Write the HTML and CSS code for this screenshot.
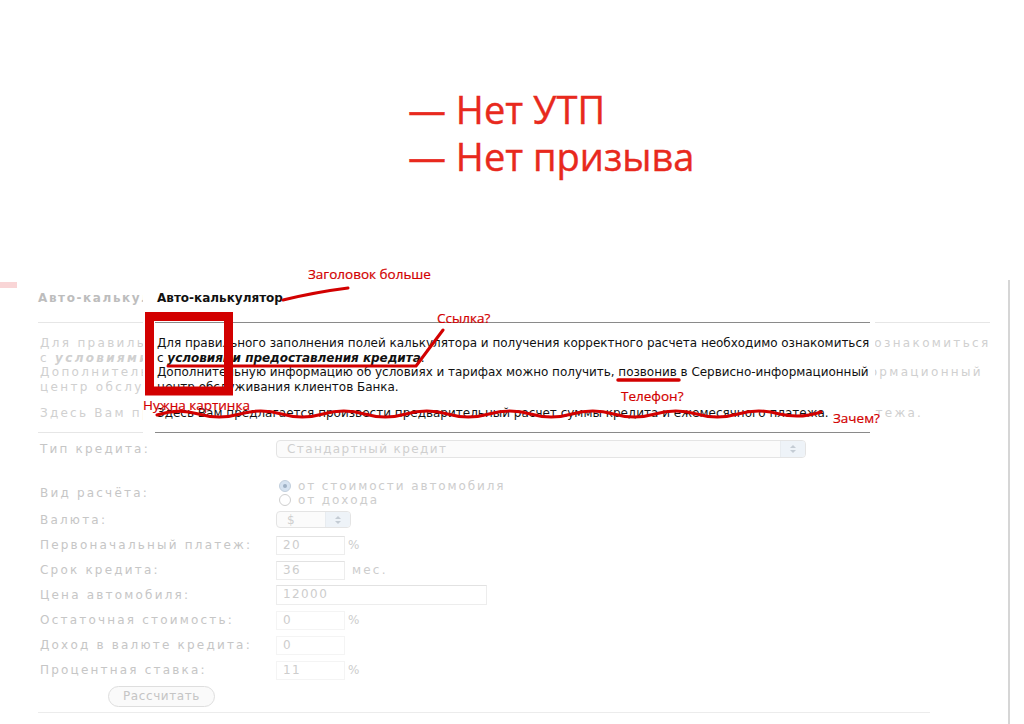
FILE: index.html
```html
<!DOCTYPE html>
<html lang="ru">
<head>
<meta charset="utf-8">
<title>Авто-калькулятор</title>
<link rel="stylesheet" href="styles.css">
</head>
<body>
<div class="slide">
  <div class="points">
    <div class="point">— Нет УТП</div>
    <div class="point">— Нет призыва</div>
  </div>

  <div class="page">
    <div class="tab"></div>
    <div class="page-body">
      <div class="title">Авто-калькулятор</div>
      <div class="rule rule-top"></div>
      <div class="intro">
        <div class="ln">Для правильного заполнения полей калькулятора и получения корректного расчета необходимо ознакомиться</div>
        <div class="ln">с <b><i>условиями предоставления кредита</i></b>.</div>
        <div class="ln">Дополнительную информацию об условиях и тарифах можно получить, позвонив в Сервисно-информационный</div>
        <div class="ln">центр обслуживания клиентов Банка.</div>
      </div>
      <div class="note">Здесь Вам предлагается произвести предварительный расчет суммы кредита и ежемесячного платежа.</div>
      <div class="rule rule-mid"></div>

      <div class="calc">
        <div class="row row-type">
          <div class="label">Тип кредита:</div>
          <div class="select select-wide"><span class="sel-text">Стандартный кредит</span><span class="stepper"><span class="up"></span><span class="down"></span></span></div>
        </div>
        <div class="row row-kind">
          <div class="label">Вид расчёта:</div>
          <div class="radios">
            <div class="radio-line"><span class="radio checked"></span>от стоимости автомобиля</div>
            <div class="radio-line"><span class="radio"></span>от дохода</div>
          </div>
        </div>
        <div class="row row-cur">
          <div class="label">Валюта:</div>
          <div class="select select-small"><span class="sel-text">$</span><span class="stepper"><span class="up"></span><span class="down"></span></span></div>
        </div>
        <div class="row">
          <div class="label">Первоначальный платеж:</div>
          <div class="input">20</div><span class="unit">%</span>
        </div>
        <div class="row">
          <div class="label">Срок кредита:</div>
          <div class="input">36</div><span class="unit unit-wide">мес.</span>
        </div>
        <div class="row">
          <div class="label">Цена автомобиля:</div>
          <div class="input input-wide">12000</div>
        </div>
        <div class="row">
          <div class="label">Остаточная стоимость:</div>
          <div class="input input-faint">0</div><span class="unit">%</span>
        </div>
        <div class="row">
          <div class="label">Доход в валюте кредита:</div>
          <div class="input input-faint">0</div>
        </div>
        <div class="row">
          <div class="label">Процентная ставка:</div>
          <div class="input input-faint">11</div><span class="unit">%</span>
        </div>
        <div class="row row-btn">
          <div class="button">Рассчитать</div>
        </div>
      </div>
      <div class="rule rule-bottom"></div>
    </div>
  </div>

  <div class="excerpt">
    <div class="ex-title">Авто-калькулятор</div>
    <div class="ex-rule ex-rule-top"></div>
    <div class="ex-intro">
      <div class="ln">Для правильного заполнения полей калькулятора и получения корректного расчета необходимо ознакомиться</div>
      <div class="ln">с <b><i>условиями предоставления кредита</i></b>.</div>
      <div class="ln">Дополнительную информацию об условиях и тарифах можно получить, позвонив в Сервисно-информационный</div>
      <div class="ln">центр обслуживания клиентов Банка.</div>
    </div>
    <div class="ex-note">Здесь Вам предлагается произвести предварительный расчет суммы кредита и ежемесячного платежа.</div>
    <div class="ex-rule ex-rule-bottom"></div>
  </div>

  <svg class="marks" width="1024" height="724" viewBox="0 0 1024 724" xmlns="http://www.w3.org/2000/svg">
    <g fill="none" stroke="#d20000" stroke-linecap="round" stroke-linejoin="round">
      <path d="M283 300 Q316 292 348 288" stroke-width="3"/>
      <path d="M168 366 L416 366 L443 330" stroke-width="3"/>
      <path d="M618 380 L679 380" stroke-width="3.5"/>
      <rect x="149.5" y="316.5" width="79" height="74.5" stroke-width="9" stroke-linecap="butt" stroke-linejoin="miter"/>
      <path d="M157 415 Q177.75 408 198.5 414 Q219.25 420 240 414 Q260.75 408 281.5 414 Q302.25 420 323 414 Q343.75 408 364.5 414 Q385.25 420 406 414 Q426.75 408 447.5 414 Q468.25 420 489 414 Q509.75 408 530.5 414 Q551.25 420 572 414 Q592.75 408 613.5 414 Q634.25 420 655 414 Q675.75 408 696.5 414 Q717.25 420 738 414 Q758.75 408 779.5 414 Q800.25 419 821 412" stroke-width="3"/>
    </g>
  </svg>
  <div class="tag tag-title">Заголовок больше</div>
  <div class="tag tag-link">Ссылка?</div>
  <div class="tag tag-pic">Нужна картинка</div>
  <div class="tag tag-phone">Телефон?</div>
  <div class="tag tag-why">Зачем?</div>
</div>
</body>
</html>
```

FILE: styles.css
```css
html, body {
  margin: 0;
  padding: 0;
  overflow: hidden;
  background: #ffffff;
}

.slide {
  position: relative;
  width: 1024px;
  height: 724px;
  overflow: hidden;
  font-family: "DejaVu Sans", Verdana, sans-serif;
}

/* Big red points */
.points {
  padding: 86px 0 0 408px;
}
.point {
  font-family: "Open Sans", "Noto Sans", sans-serif;
  font-size: 38px;
  line-height: 47px;
  height: 47px;
  color: #e8291d;
  white-space: nowrap;
  -webkit-text-stroke: 0.4px #e8291d;
}

/* Faded background page */
.page {
  margin-top: 100px;
  width: 1010px;
  height: 444px;
  padding-top: 2px;
  box-sizing: border-box;
  border-right: 2px solid #d6d6d6;
}
.tab {
  width: 17px;
  height: 6px;
  background: #f9d5d6;
}
.page-body {
  padding-left: 38px;
  color: #cbcbcb;
  font-size: 12px;
  letter-spacing: 2.2px;
}
.title {
  margin-top: 3px;
  font-weight: bold;
  line-height: 15px;
  color: #bdbdbd;
  letter-spacing: 1.6px;
  white-space: nowrap;
}
.rule {
  height: 1px;
  background: #e6e6e6;
}
.rule-top {
  margin-top: 16px;
  width: 952px;
}
.intro {
  margin-top: 13px;
  padding-left: 2px;
  line-height: 14.6px;
  color: #d0d0d0;
  letter-spacing: 2.33px;
}
.ln {
  white-space: nowrap;
}
.note {
  margin-top: 12px;
  padding-left: 2px;
  line-height: 14.6px;
  color: #d0d0d0;
  white-space: nowrap;
  letter-spacing: 2.25px;
}
.rule-mid {
  margin-top: 11px;
  width: 120px;
}
.rule-bottom {
  margin-top: 4px;
  width: 892px;
  background: #ececec;
}

/* Calculator form */
.calc {
  padding-left: 2px;
}
.row {
  display: flex;
  align-items: center;
  height: 25px;
}
.label {
  width: 236px;
  flex: none;
  white-space: nowrap;
  color: #c6c6c6;
}
.row-type {
  margin-top: 7px;
  height: 19px;
}
.row-kind {
  margin-top: 20px;
  height: 28px;
}
.row-cur {
  margin-top: 3px;
  margin-bottom: 3px;
  height: 20px;
}
.row-btn {
  height: 23px;
  margin-top: 2px;
}

.select {
  display: flex;
  align-items: stretch;
  box-sizing: border-box;
  border: 1px solid #e4e4e4;
  border-radius: 4px;
  background: #fbfbfb;
  overflow: hidden;
}
.select-wide {
  width: 530px;
  height: 18px;
}
.select-small {
  width: 75px;
  height: 17px;
}
.sel-text {
  flex: 1;
  padding-left: 10px;
  line-height: 16px;
  color: #cfcfcf;
  letter-spacing: 1.4px;
}
.stepper {
  width: 24px;
  flex: none;
  display: flex;
  flex-direction: column;
  align-items: center;
  justify-content: center;
  gap: 2px;
  background: #eef3f8;
  border-left: 1px solid #e8ecf0;
}
.up {
  width: 0;
  height: 0;
  border-left: 3px solid transparent;
  border-right: 3px solid transparent;
  border-bottom: 3px solid #c4ccd4;
}
.down {
  width: 0;
  height: 0;
  border-left: 3px solid transparent;
  border-right: 3px solid transparent;
  border-top: 3px solid #c4ccd4;
}

.radios {
  display: flex;
  flex-direction: column;
  margin-left: 3px;
}
.radio-line {
  display: flex;
  align-items: center;
  height: 14px;
  white-space: nowrap;
  color: #cdcdcd;
  letter-spacing: 1.9px;
}
.radio {
  width: 12px;
  height: 12px;
  box-sizing: border-box;
  border: 1px solid #cfcfcf;
  border-radius: 50%;
  background: #ffffff;
  margin-right: 7px;
  flex: none;
  display: flex;
  align-items: center;
  justify-content: center;
}
.radio.checked {
  background: #d6e3f1;
  border-color: #c2cfdd;
}
.radio.checked::after {
  content: "";
  width: 4px;
  height: 4px;
  border-radius: 50%;
  background: #9eb0c4;
}

.input {
  width: 69px;
  height: 19px;
  box-sizing: border-box;
  border: 1px solid #ededed;
  border-top-color: #e2e2e2;
  padding-left: 6px;
  line-height: 17px;
  color: #cdcdcd;
  letter-spacing: 1.4px;
  background: #ffffff;
}
.input-wide {
  width: 211px;
  height: 20px;
}
.input-faint {
  border-color: #f4f4f4;
}
.unit {
  margin-left: 3px;
  color: #cdcdcd;
}
.unit-wide {
  margin-left: 7px;
}

.button {
  margin-left: 68px;
  width: 107px;
  height: 21px;
  box-sizing: border-box;
  border: 1px solid #dedede;
  border-radius: 11px;
  background: #fafafa;
  text-align: center;
  line-height: 19px;
  color: #c5c5c5;
  letter-spacing: 0.6px;
}

/* Crisp excerpt lying over the faded page */
.excerpt {
  position: absolute;
  left: 143px;
  top: 286px;
  width: 732px;
  height: 148px;
  box-sizing: border-box;
  padding: 5px 0 0 12px;
  background: #ffffff;
  color: #111111;
  font-family: "DejaVu Sans", Verdana, sans-serif;
  font-size: 12px;
}
.ex-title {
  padding-left: 2px;
  font-weight: bold;
  line-height: 15px;
  white-space: nowrap;
}
.ex-rule {
  width: 715px;
  height: 1px;
  background: #8a8a8a;
}
.ex-rule-top {
  margin-top: 16px;
}
.ex-intro {
  margin-top: 13px;
  padding-left: 2px;
  line-height: 14.6px;
  letter-spacing: -0.03px;
}
.ex-note {
  margin-top: 12px;
  padding-left: 2px;
  line-height: 14.6px;
  white-space: nowrap;
}
.ex-rule-bottom {
  margin-top: 11px;
}

/* Red review marks */
.marks {
  position: absolute;
  left: 0;
  top: 0;
}
.tag {
  position: absolute;
  font-family: "Open Sans", "Noto Sans", sans-serif;
  font-size: 13.5px;
  line-height: 16px;
  color: #d20000;
  white-space: nowrap;
  -webkit-text-stroke: 0.2px #d20000;
}
.tag-title { left: 308px; top: 266px; }
.tag-link  { left: 437px; top: 310px; }
.tag-pic   { left: 143px; top: 397px; }
.tag-phone { left: 621px; top: 388px; }
.tag-why   { left: 833px; top: 410px; }
```
